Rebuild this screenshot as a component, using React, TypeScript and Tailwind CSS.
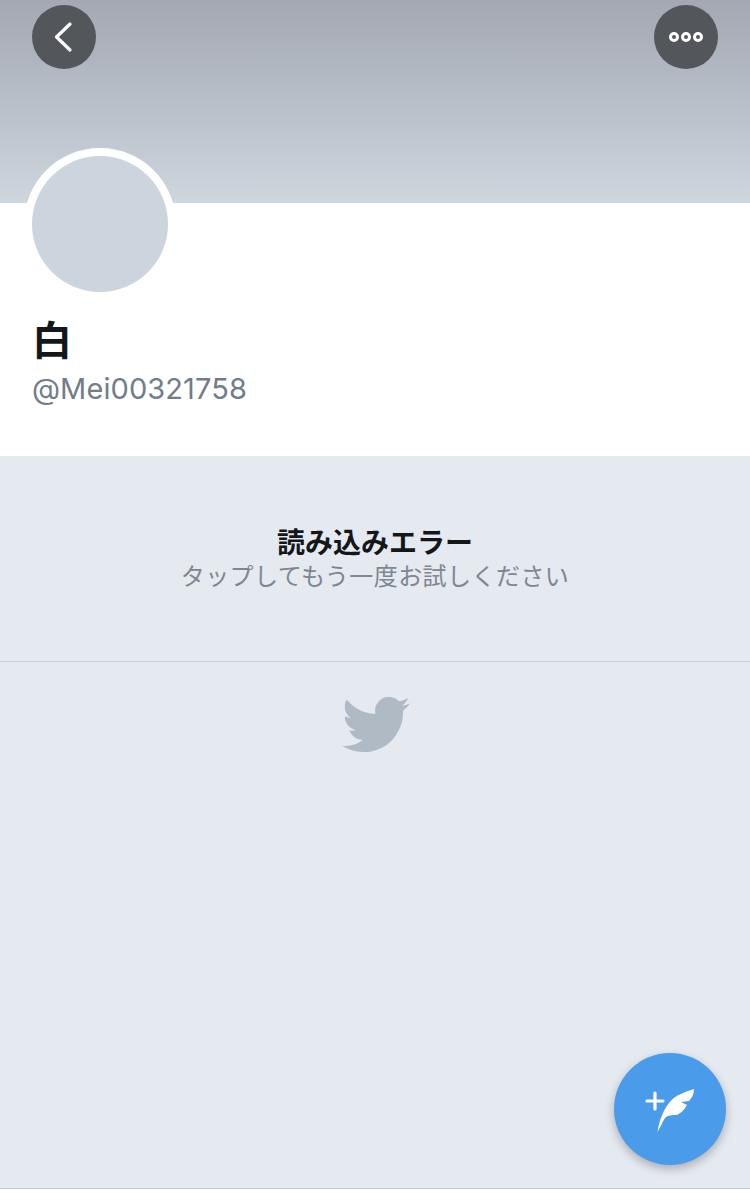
export default function App() {
  return (
    <div className="relative h-[1201px] w-[750px] overflow-hidden bg-white font-['Inter','Noto_Sans_CJK_JP',sans-serif]">
      <header className="flex h-[203px] items-start justify-between bg-gradient-to-b from-[#a3a8b2] to-[#ced6de] pl-8 pr-8 pt-[5px]">
        <button className="flex h-16 w-16 items-center justify-center rounded-full bg-[#53575c]">
          <svg width="64" height="64" viewBox="0 0 64 64" fill="none">
            <path d="M38 19 L24.5 32 L38 45" stroke="#fff" strokeWidth="3.2" strokeLinecap="round" strokeLinejoin="round" />
          </svg>
        </button>
        <button className="flex h-16 w-16 items-center justify-center gap-[2px] rounded-full bg-[#53575c]">
          <span className="h-[10px] w-[10px] rounded-full border-[3px] border-white" />
          <span className="h-[10px] w-[10px] rounded-full border-[3px] border-white" />
          <span className="h-[10px] w-[10px] rounded-full border-[3px] border-white" />
        </button>
      </header>

      <section className="flow-root h-[253px] bg-white px-8">
        <div className="-ml-[8px] -mt-[55px] h-[152px] w-[152px] rounded-full bg-white p-[8px]">
          <div className="h-[136px] w-[136px] rounded-full bg-[#ccd5dd]" />
        </div>
        <h1 className="mt-[12px] text-[40px] font-bold leading-[58px] text-[#14171a]">白</h1>
        <p className="mt-[1px] text-[29px] leading-[36px] tracking-[0.1px] text-[#717d89]">@Mei00321758</p>
      </section>

      <main className="flex h-[733px] flex-col border-b border-[#c4c9ce] bg-[#e5e9f0]">
        <div className="flex h-[206px] flex-col items-center border-b border-[#ccd1d7] pt-[70px]">
          <p className="text-[28px] font-bold leading-[34px] text-[#14171a]">読み込みエラー</p>
          <p className="mt-[2px] text-[24px] leading-[30px] tracking-[0.45px] text-[#7d8791]">タップしてもう一度お試しください</p>
        </div>
        <div className="flex justify-center pl-[1px] pt-[35px]">
          <svg width="68" height="56" viewBox="0 2.3 24 19.76" fill="#b0bac4">
            <path d="M23.953 4.57a10 10 0 01-2.825.775 4.958 4.958 0 002.163-2.723c-.951.555-2.005.959-3.127 1.184a4.92 4.92 0 00-8.384 4.482C7.69 8.095 4.067 6.13 1.64 3.162a4.822 4.822 0 00-.666 2.475c0 1.71.87 3.213 2.188 4.096a4.904 4.904 0 01-2.228-.616v.06a4.923 4.923 0 003.946 4.827 4.996 4.996 0 01-2.212.085 4.936 4.936 0 004.604 3.417 9.867 9.867 0 01-6.102 2.105c-.39 0-.779-.023-1.17-.067a13.995 13.995 0 007.557 2.209c9.053 0 13.998-7.496 13.998-13.985 0-.21 0-.42-.015-.63A9.935 9.935 0 0024 4.59z" />
          </svg>
        </div>
      </main>

      <button className="absolute left-[614px] top-[1053px] flex h-28 w-28 items-center justify-center rounded-full bg-[#4a9bea] shadow-[0_4px_10px_rgba(0,0,0,0.25)]">
        <svg width="112" height="112" viewBox="0 0 112 112" fill="#fff">
          <path d="M41 40 V56 M33 48 H49" stroke="#fff" strokeWidth="3.2" fill="none" strokeLinecap="round" />
          <path d="M43.5 79 C45 68 49 58 55 50 C61 42 71 39 80 36 C80 41 78 45 75 48 L67 49 L73 52 C70 57 67 60 63 62 C58 62 54 62 51 65 C48 70 46 75 43.5 79 Z" />
        </svg>
      </button>
    </div>
  );
}
